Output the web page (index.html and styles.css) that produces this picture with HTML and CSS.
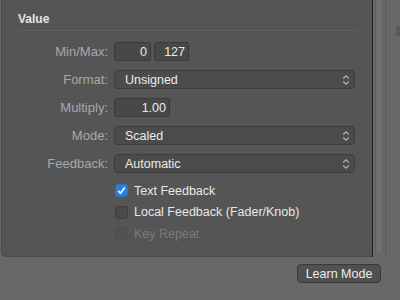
FILE: index.html
```html
<!DOCTYPE html>
<html lang="en">

<head>
    <meta charset="UTF-8">
    <title>Value</title>
    <link rel="stylesheet" href="styles.css">
</head>

<body>
    <div class="top">
        <div class="panel">
            <div class="section-title">Value</div>
            <div class="form">
                <div class="label">Min/Max:</div>
                <div class="pair">
                    <span class="field w-min">0</span>
                    <span class="field w-max">127</span>
                </div>

                <div class="label">Format:</div>
                <div class="popup">
                    <span>Unsigned</span>
                    <svg class="chevrons" width="8" height="12" viewBox="0 0 8 12"><path d="M1.2 4.6 L4 1.8 L6.8 4.6 M1.2 7.4 L4 10.2 L6.8 7.4" /></svg>
                </div>

                <div class="label">Multiply:</div>
                <div class="pair">
                    <span class="field w-mult">1.00</span>
                </div>

                <div class="label">Mode:</div>
                <div class="popup">
                    <span>Scaled</span>
                    <svg class="chevrons" width="8" height="12" viewBox="0 0 8 12"><path d="M1.2 4.6 L4 1.8 L6.8 4.6 M1.2 7.4 L4 10.2 L6.8 7.4" /></svg>
                </div>

                <div class="label">Feedback:</div>
                <div class="popup">
                    <span>Automatic</span>
                    <svg class="chevrons" width="8" height="12" viewBox="0 0 8 12"><path d="M1.2 4.6 L4 1.8 L6.8 4.6 M1.2 7.4 L4 10.2 L6.8 7.4" /></svg>
                </div>
            </div>

            <div class="checks">
                <div class="check">
                    <span class="box checked">
                        <svg width="13" height="13" viewBox="0 0 13 13"><path d="M3.2 6.8 L5.5 9.2 L9.8 3.4" /></svg>
                    </span>
                    <span>Text Feedback</span>
                </div>
                <div class="check">
                    <span class="box"></span>
                    <span>Local Feedback (Fader/Knob)</span>
                </div>
                <div class="check disabled">
                    <span class="box"></span>
                    <span>Key Repeat</span>
                </div>
            </div>
        </div>
        <div class="scroller">
            <div class="thumb"></div>
        </div>
        <div class="edge-mark"></div>
    </div>
    <div class="footer">
        <button class="learn-button">Learn Mode</button>
    </div>
</body>

</html>
```

FILE: styles.css
```css
body {
    font-family: "Liberation Sans", Arial, sans-serif;
    font-size: 12.5px;
    margin: 0;
    padding: 0;
    width: 400px;
    height: 300px;
    overflow: hidden;
    background-color: #686868;
}

.top {
    display: flex;
    height: 257px;
}

.panel {
    width: 371px;
    margin-left: 1px;
    border-left: 1px solid #4a4a4a;
    border-bottom: 1px solid #4a4a4a;
    border-bottom-left-radius: 5px;
    background-color: #555555;
    box-sizing: border-box;
}

.section-title {
    margin: 0 14px 0 16px;
    padding-top: 12px;
    padding-bottom: 3px;
    line-height: 15px;
    font-size: 12px;
    font-weight: bold;
    color: #e2e2e2;
    border-bottom: 1px solid #606060;
}

.form {
    display: grid;
    grid-template-columns: 106px 1fr;
    grid-auto-rows: 19px;
    column-gap: 6px;
    row-gap: 9px;
    margin-top: 11px;
    padding-right: 17px;
}

.label {
    text-align: right;
    line-height: 19px;
    color: #a9a9a9;
    font-size: 13px;
}

.pair {
    display: flex;
    gap: 3px;
}

.field {
    height: 19px;
    line-height: 18px;
    box-sizing: border-box;
    text-align: right;
    padding-right: 3px;
    color: #ececec;
    background-color: #484848;
    border: 1px solid #3a3a3a;
    border-radius: 2px;
}

.w-min {
    width: 37px;
}

.w-max {
    width: 35px;
}

.w-mult {
    width: 56px;
}

.popup {
    display: flex;
    align-items: center;
    justify-content: space-between;
    height: 19px;
    box-sizing: border-box;
    padding: 0 4px 0 10px;
    color: #ececec;
    background-color: #4b4b4b;
    border: 1px solid #3c3c3c;
    border-radius: 4px;
}

.chevrons path {
    fill: none;
    stroke: #b8b8b8;
    stroke-width: 1.2;
}

.checks {
    display: flex;
    flex-direction: column;
    gap: 8.5px;
    margin-top: 11px;
    margin-left: 113px;
}

.check {
    display: flex;
    align-items: center;
    gap: 6px;
    height: 13px;
    color: #e8e8e8;
}

.box {
    width: 13px;
    height: 13px;
    box-sizing: border-box;
    background-color: #4a4a4a;
    border: 1px solid #3d3d3d;
    border-radius: 3px;
}

.box.checked {
    background-color: #2b7fdc;
    border-color: #2672c6;
}

.box svg {
    display: block;
    margin: -1px;
}

.box svg path {
    fill: none;
    stroke: #ffffff;
    stroke-width: 1.6;
}

.check.disabled {
    color: #7a7a7a;
}

.check.disabled .box {
    background-color: #525252;
    border-color: #4d4d4d;
}

.scroller {
    width: 10px;
    border-left: 1px solid #1f1f1f;
    border-right: 1px solid #595959;
    background-color: #6a6a6a;
    padding-left: 2px;
    box-sizing: content-box;
}

.thumb {
    width: 8px;
    height: 255px;
    box-sizing: border-box;
    background-color: #717171;
    border: 1px solid #5f5f5f;
    border-top: none;
    border-bottom-left-radius: 4px;
    border-bottom-right-radius: 4px;
}

/* dark notch on the window edge */
.edge-mark {
    width: 4px;
    height: 10px;
    margin-top: 26px;
    margin-left: auto;
    background-color: #5a5a5a;
}

.footer {
    display: flex;
    justify-content: flex-end;
    padding-top: 7px;
    padding-right: 19px;
}

.learn-button {
    width: 84px;
    height: 19px;
    padding: 0;
    font-family: "Liberation Sans", Arial, sans-serif;
    font-size: 12.5px;
    color: #ececec;
    background-color: #505050;
    border: 1px solid #393939;
    border-radius: 4px;
}
```
